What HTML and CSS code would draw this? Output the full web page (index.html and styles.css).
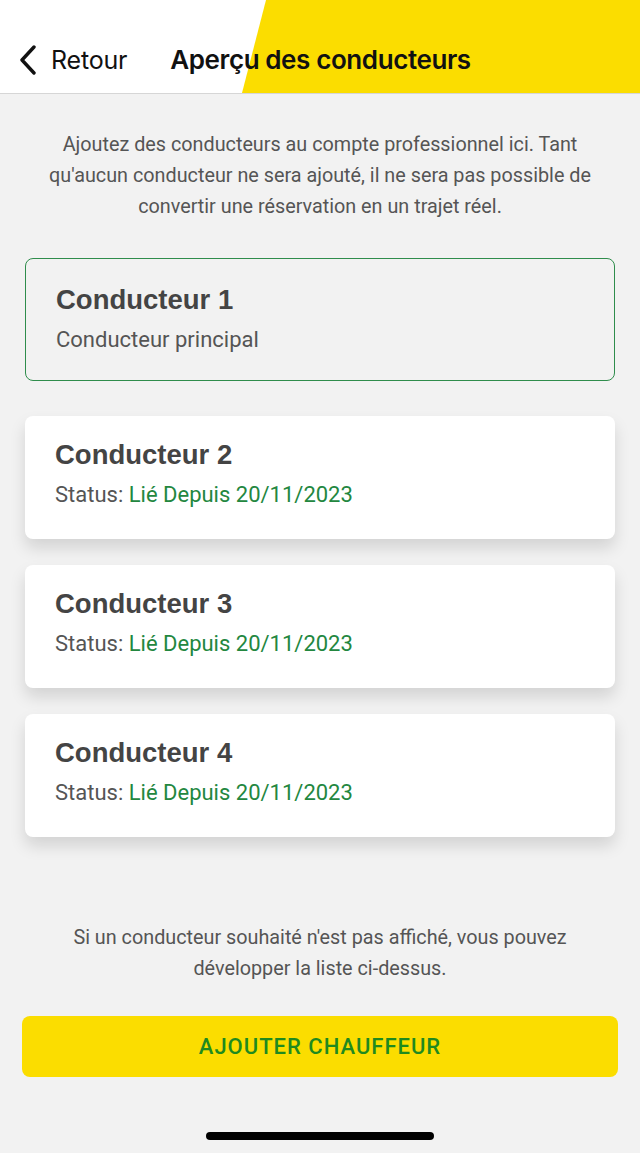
FILE: index.html
```html
<!DOCTYPE html>
<html lang="fr">
<head>
<meta charset="utf-8">
<link rel="stylesheet" href="styles.css">
</head>
<body>
<div class="screen">
  <header class="topbar">
    <div class="yellow-shape"></div>
    <div class="topbar-content">
      <a class="back">
        <svg class="chev" width="20" height="30" viewBox="0 0 20 30"><path d="M16 2 L4 15 L16 28" fill="none" stroke="#111" stroke-width="3.4" stroke-linecap="round" stroke-linejoin="round"/></svg>
        <span>Retour</span>
      </a>
      <h1 class="title">Aperçu des conducteurs</h1>
    </div>
  </header>

  <p class="intro">Ajoutez des conducteurs au compte professionnel ici. Tant qu'aucun conducteur ne sera ajouté, il ne sera pas possible de convertir une réservation en un trajet réel.</p>

  <div class="list">
    <div class="card card-main">
      <div class="card-title">Conducteur 1</div>
      <div class="card-sub">Conducteur principal</div>
    </div>
    <div class="card card-linked">
      <div class="card-title">Conducteur 2</div>
      <div class="card-sub">Status: <span class="ok">Lié Depuis 20/11/2023</span></div>
    </div>
    <div class="card card-linked">
      <div class="card-title">Conducteur 3</div>
      <div class="card-sub">Status: <span class="ok">Lié Depuis 20/11/2023</span></div>
    </div>
    <div class="card card-linked">
      <div class="card-title">Conducteur 4</div>
      <div class="card-sub">Status: <span class="ok">Lié Depuis 20/11/2023</span></div>
    </div>
  </div>

  <p class="note">Si un conducteur souhaité n'est pas affiché, vous pouvez développer la liste ci-dessus.</p>

  <button class="add">AJOUTER CHAUFFEUR</button>

  <div class="home-bar"><div class="home-indicator"></div></div>
</div>
</body>
</html>
```

FILE: styles.css
```css
* { box-sizing: border-box; }
html, body { margin: 0; padding: 0; }
body {
  background: #f2f2f2;
  font-family: Roboto, "Noto Sans", sans-serif;
  color: #555;
}
.screen {
  width: 640px;
  height: 1153px;
  display: flex;
  flex-direction: column;
  overflow: hidden;
}
.topbar {
  position: relative;
  height: 94px;
  background: #fff;
  border-bottom: 1px solid #d6d6d6;
  overflow: hidden;
  flex-shrink: 0;
}
.yellow-shape {
  position: absolute;
  top: 0;
  right: 0;
  bottom: 0;
  left: 242px;
  background: #fbdd00;
  clip-path: polygon(24px 0, 100% 0, 100% 100%, 0 100%);
}
.topbar-content {
  position: relative;
  display: flex;
  align-items: center;
  height: 100%;
  padding: 26px 0 0 18px;
}
.back {
  display: flex;
  align-items: center;
  gap: 13px;
  font-family: Inter, Roboto, sans-serif;
  font-size: 25px;
  color: #111;
  letter-spacing: -0.2px;
}
.title {
  margin: 0 0 0 43px;
  font-family: Inter, Roboto, sans-serif;
  font-weight: 600;
  font-size: 26px;
  color: #111;
  letter-spacing: -0.4px;
}
.intro {
  margin: 35px 30px 0;
  text-align: center;
  font-size: 19.8px;
  line-height: 31px;
  color: #555;
}
.list {
  display: flex;
  flex-direction: column;
  gap: 26px;
  margin: 36px 25px 0 25px;
}
.card {
  height: 123px;
  border-radius: 8px;
  padding: 24px 30px 0 30px;
}
.card-main {
  border: 1.5px solid #2f8d4c;
  background: #f2f2f2;
  padding-top: 26px;
  margin-bottom: 9px;
}
.card-linked {
  background: #fff;
  box-shadow: 0 9px 16px rgba(0, 0, 0, 0.13);
}
.card-title {
  font-family: "Liberation Sans", Arial, sans-serif;
  font-weight: bold;
  font-size: 27.5px;
  line-height: 30px;
  color: #444;
}
.card-sub {
  margin-top: 12px;
  font-size: 22px;
  line-height: 26px;
  color: #555;
}
.ok { color: #23873f; }
.note {
  margin: 85px 58px 0;
  text-align: center;
  font-size: 19.8px;
  line-height: 31px;
  color: #555;
}
.add {
  margin: 32px 22px 0;
  height: 61px;
  border: none;
  border-radius: 8px;
  background: #fbdd00;
  color: #1f8a1f;
  font-family: Roboto, sans-serif;
  font-weight: 500;
  font-size: 22px;
  letter-spacing: 1px;
}
.home-bar {
  display: flex;
  justify-content: center;
  margin-top: 55px;
}
.home-indicator {
  width: 228px;
  height: 8px;
  border-radius: 4px;
  background: #000;
}
```
